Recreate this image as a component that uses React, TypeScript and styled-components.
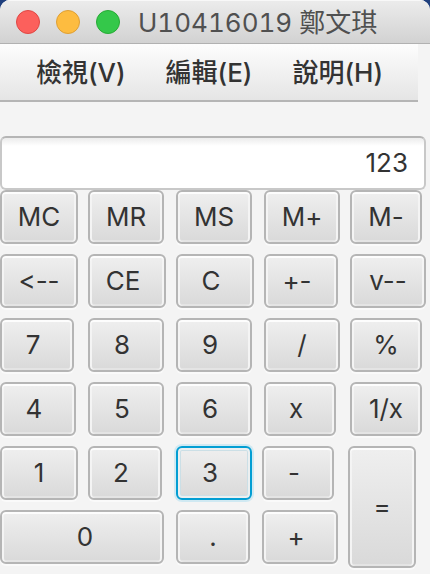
import React, { useState } from "react";
import styled, { createGlobalStyle, css } from "styled-components";

const GlobalStyle = createGlobalStyle`
  *, *::before, *::after { box-sizing: border-box; }
  html { background: #1f3f7d; }
  body { margin: 0; }
`;

const Window = styled.main`
  min-height: 100vh;
  overflow: hidden;
  border-radius: 10px 10px 0 0;
  background: #f4f4f4;
  color: #333;
  font-family: Inter, "Noto Sans CJK TC", sans-serif;
  font-size: 26px;
`;

const TitleBar = styled.header`
  display: flex;
  align-items: center;
  height: 44px;
  padding: 0 16px;
  border-bottom: 1px solid #b1b1b1;
  background: linear-gradient(#ececec, #d2d2d2);
  box-shadow: inset 0 1px #f8f8f8;
`;

const Lights = styled.div`
  display: flex;
  gap: 16px;
`;

const Light = styled.button<{ $fill: string; $edge: string }>`
  width: 24px;
  height: 24px;
  padding: 0;
  border: 1px solid ${(p) => p.$edge};
  border-radius: 50%;
  background: ${(p) => p.$fill};
`;

const Title = styled.h1`
  margin: 2px 0 0 18px;
  color: #505050;
  font: 400 26px/40px Inter, "Noto Sans CJK TC", sans-serif;
  font-variation-settings: "opsz" 14;
  font-variant-numeric: tabular-nums;
  white-space: nowrap;
`;

const MenuBar = styled.nav`
  display: flex;
  gap: 40px;
  height: 58px;
  margin-right: 12px;
  padding: 0 36px;
  border-bottom: 2px solid #b5b5b5;
  background: linear-gradient(#fdfdfd, #e5e5e5);
`;

const MenuButton = styled.button`
  padding: 2px 0 0;
  border: 0;
  background: none;
  color: inherit;
  font: 500 26px/54px Inter, "Noto Sans CJK TC", sans-serif;
  font-feature-settings: "calt" 0;
  font-variation-settings: "wght" 420;
  white-space: nowrap;
`;

const Display = styled.input`
  display: block;
  width: calc(100% - 4px);
  height: 54px;
  margin-top: 34px;
  padding: 0 16px 2px;
  border: 2px solid #c8c8c8;
  border-top-color: #b5b5b5;
  border-radius: 6px;
  outline: 0;
  background: linear-gradient(#ececec, #fff 8px);
  color: inherit;
  font: inherit;
  text-align: right;
`;

const Keypad = styled.div<{ $columns: string }>`
  display: grid;
  grid-template-columns: ${(p) => p.$columns};
  grid-auto-rows: 54px;
  gap: 10px 0;
  & + & {
    margin-top: 10px;
  }
`;

const Key = styled.button<{
  $gap: number;
  $lead?: number;
  $trail?: number;
  $wide?: boolean;
  $tall?: boolean;
  $active?: boolean;
}>`
  min-width: 0;
  height: ${(p) => (p.$tall ? "122px" : "54px")};
  margin-right: ${(p) => p.$gap}px;
  padding: 0 ${(p) => p.$trail ?? 0}px 2px ${(p) => p.$lead ?? 0}px;
  border: 2px solid #b5b5b5;
  border-radius: 6px;
  outline: 0;
  background: linear-gradient(#efefef, #d9d9d9);
  box-shadow: inset 0 2px #fdfdfd, inset 2px 0 #f4f4f4, inset -2px 0 #f4f4f4,
    inset 0 -2px #e4e4e4, 0 2px #fafafa;
  color: inherit;
  font: inherit;
  font-feature-settings: "calt" 0;
  white-space: nowrap;
  ${(p) => p.$wide && css`grid-column: span 2;`}
  ${(p) => p.$tall && css`grid-row: span 2;`}
  ${(p) =>
    p.$active &&
    css`
      border-color: #039ed3;
      box-shadow: inset 0 0 0 2px #eceff0, inset 0 0 0 3px #cbdfe6, 0 0 0 2px #d0e9f2;
    `}
`;

type KeySpec = {
  label: string;
  gap: number;
  lead?: number;
  trail?: number;
  wide?: boolean;
  tall?: boolean;
};

const upperKeys: KeySpec[] = [
  { label: "MC", gap: 10 },
  { label: "MR", gap: 12 },
  { label: "MS", gap: 12 },
  { label: "M+", gap: 10 },
  { label: "M-", gap: 8 },
  { label: "<--", gap: 10 },
  { label: "CE", gap: 10, trail: 8 },
  { label: "C", gap: 10, trail: 8 },
  { label: "+-", gap: 12, trail: 8 },
  { label: "v--", gap: 4 },
  { label: "7", gap: 14, trail: 8 },
  { label: "8", gap: 12, trail: 8 },
  { label: "9", gap: 12, trail: 8 },
  { label: "/", gap: 10 },
  { label: "%", gap: 8 },
  { label: "4", gap: 12, trail: 8 },
  { label: "5", gap: 12, trail: 8 },
  { label: "6", gap: 12, trail: 8 },
  { label: "x", gap: 14, trail: 8 },
  { label: "1/x", gap: 8 },
];

const lowerKeys: KeySpec[] = [
  { label: "1", gap: 10 },
  { label: "2", gap: 14, trail: 8 },
  { label: "3", gap: 10, trail: 8 },
  { label: "-", gap: 14, trail: 8 },
  { label: "=", gap: 14, tall: true },
  { label: "0", gap: 12, lead: 6, wide: true },
  { label: ".", gap: 12 },
  { label: "+", gap: 10, trail: 8 },
];

export default function App() {
  const [value, setValue] = useState("123");
  const [active, setActive] = useState("3");

  const press = (label: string) => {
    setActive(label);
    if (/^[0-9.]$/.test(label)) setValue((v) => v + label);
    else if (label === "C" || label === "CE") setValue("0");
    else if (label === "<--") setValue((v) => v.slice(0, -1) || "0");
  };

  const renderKey = (k: KeySpec) => (
    <Key
      key={k.label}
      type="button"
      $gap={k.gap}
      $lead={k.lead}
      $trail={k.trail}
      $wide={k.wide}
      $tall={k.tall}
      $active={k.label === active}
      onClick={() => press(k.label)}
    >
      {k.label}
    </Key>
  );

  return (
    <>
      <GlobalStyle />
      <Window>
        <TitleBar>
          <Lights>
            <Light type="button" aria-label="Close" $fill="#fc605c" $edge="#df4744" />
            <Light type="button" aria-label="Minimize" $fill="#fdbc40" $edge="#de9f34" />
            <Light type="button" aria-label="Zoom" $fill="#34c84a" $edge="#27aa35" />
          </Lights>
          <Title>U10416019 鄭文琪</Title>
        </TitleBar>
        <MenuBar>
          <MenuButton type="button">檢視(V)</MenuButton>
          <MenuButton type="button">編輯(E)</MenuButton>
          <MenuButton type="button">說明(H)</MenuButton>
        </MenuBar>
        <Display aria-label="Result" value={value} readOnly />
        <Keypad $columns="88fr 88fr 88fr 86fr 80fr">{upperKeys.map(renderKey)}</Keypad>
        <Keypad $columns="88fr 88fr 86fr 86fr 82fr">{lowerKeys.map(renderKey)}</Keypad>
      </Window>
    </>
  );
}
